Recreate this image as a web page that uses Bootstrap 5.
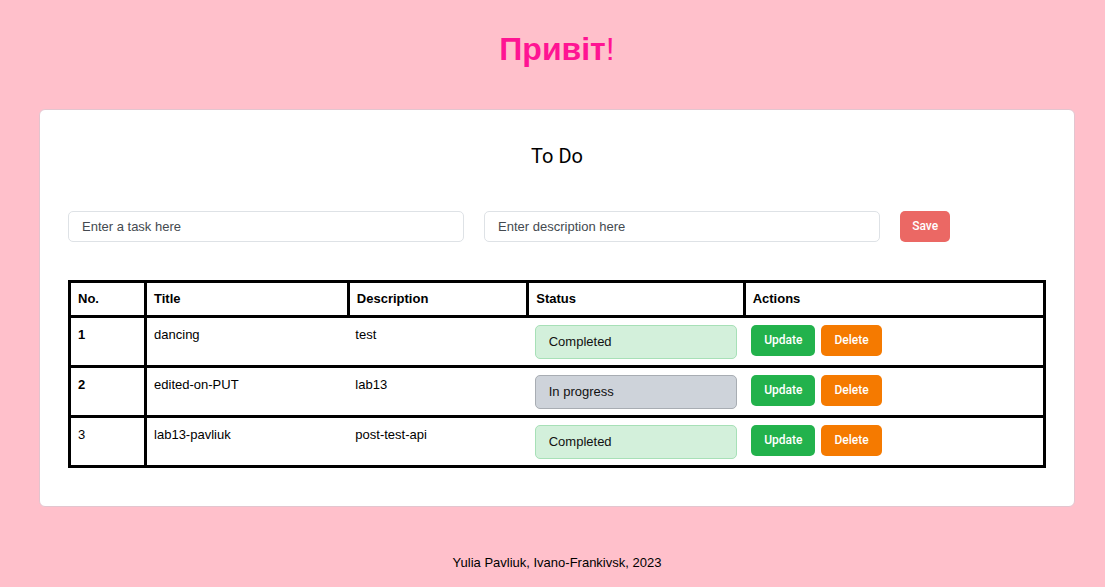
<!DOCTYPE html>
<html lang="uk">
<head>
<meta charset="utf-8">
<meta name="viewport" content="width=device-width, initial-scale=1">
<title>To Do</title>
<link href="https://cdn.jsdelivr.net/npm/bootstrap@5.3.0/dist/css/bootstrap.min.css" rel="stylesheet">
<style>
  body { background: #ffc0cb; color: #000; font: 13px/20px "Liberation Sans", Arial, sans-serif; }
  .page { padding: 29px 30px 12px 39px; }
  .greeting { color: #ff1493; font-size: 32px; line-height: 41px; font-weight: 700; margin-bottom: 39px; }
  .greeting span { font-weight: 400; }
  .todo-card { --bs-card-border-color: #e3c5cf; --bs-card-border-radius: 6px; --bs-card-color: #000; }
  .todo-card .card-body { padding: 31px 28px 38px; }
  .todo-title { font: 20px/30px Roboto, sans-serif; margin-bottom: 40px; }
  .task-form { gap: 20px; margin-bottom: 38px; }
  .field { width: 40.5%; }
  .field .form-control { font-size: 13px; line-height: 19px; padding: 5px 13px; border-color: #dee2e6; border-radius: 5px; }
  .field .form-control::placeholder { color: #444a50; opacity: 1; }
  .btn { --bs-btn-color: #fff; --bs-btn-hover-color: #fff; font: 500 12px/21px Roboto, sans-serif; padding: 5px 13px; border: 0; border-radius: 5px; }
  .btn-save { --bs-btn-bg: #eb6864; --bs-btn-hover-bg: #d65e5a; padding: 5px 12px; }
  .btn-update { --bs-btn-bg: #22b24c; --bs-btn-hover-bg: #1d9741; }
  .btn-delete { --bs-btn-bg: #f57a00; --bs-btn-hover-bg: #d06800; }
  .actions { gap: 6px; }
  .task-table { table-layout: fixed; color: #000; border: 3px solid #000; }
  .task-table > :not(caption) > * > * { padding: 7px 7px 6px; border: 0 solid #000; box-shadow: none; color: #000; }
  .task-table > thead > tr > th { padding: 6px 7px; border-width: 3px; }
  .task-table > tbody > tr { border: 0 solid #000; border-width: 3px 0; }
  .task-table > tbody > tr > :first-child { border-right-width: 3px; }
  .col-no { width: 7.8%; } .col-title { width: 20.8%; } .col-desc { width: 18.4%; } .col-status { width: 22.2%; }
  .status { padding: 6px 13px; border-radius: 5px; margin: 0; color: #111; }
  .status.alert-success { background: #d3f0db; border-color: #a7e0b7; }
  .status.alert-secondary { background: #ced3da; border-color: #a8adb3; }
  .credit { margin-top: 46px; }
</style>
</head>
<body>
<div class="page">
  <h1 class="greeting text-center">Привіт<span>!</span></h1>
  <main class="card todo-card">
    <div class="card-body">
      <h2 class="todo-title text-center">To Do</h2>
      <form class="task-form d-flex align-items-center">
        <div class="field">
          <input type="text" class="form-control" placeholder="Enter a task here" aria-label="Enter a task here">
        </div>
        <div class="field">
          <input type="text" class="form-control" placeholder="Enter description here" aria-label="Enter description here">
        </div>
        <button type="submit" class="btn btn-save">Save</button>
      </form>
      <table class="table task-table mb-0">
        <colgroup><col class="col-no"><col class="col-title"><col class="col-desc"><col class="col-status"><col></colgroup>
        <thead>
          <tr><th scope="col">No.</th><th scope="col">Title</th><th scope="col">Description</th><th scope="col">Status</th><th scope="col">Actions</th></tr>
        </thead>
        <tbody>
          <tr>
            <th scope="row">1</th><td>dancing</td><td>test</td>
            <td><div class="alert alert-success status">Completed</div></td>
            <td><div class="actions d-flex"><button type="button" class="btn btn-update">Update</button><button type="button" class="btn btn-delete">Delete</button></div></td>
          </tr>
          <tr>
            <th scope="row">2</th><td>edited-on-PUT</td><td>lab13</td>
            <td><div class="alert alert-secondary status">In progress</div></td>
            <td><div class="actions d-flex"><button type="button" class="btn btn-update">Update</button><button type="button" class="btn btn-delete">Delete</button></div></td>
          </tr>
          <tr>
            <td>3</td><td>lab13-pavliuk</td><td>post-test-api</td>
            <td><div class="alert alert-success status">Completed</div></td>
            <td><div class="actions d-flex"><button type="button" class="btn btn-update">Update</button><button type="button" class="btn btn-delete">Delete</button></div></td>
          </tr>
        </tbody>
      </table>
    </div>
  </main>
  <footer class="credit text-center">Yulia Pavliuk, Ivano-Frankivsk, 2023</footer>
</div>
<script src="https://cdn.jsdelivr.net/npm/bootstrap@5.3.0/dist/js/bootstrap.bundle.min.js"></script>
</body>
</html>
